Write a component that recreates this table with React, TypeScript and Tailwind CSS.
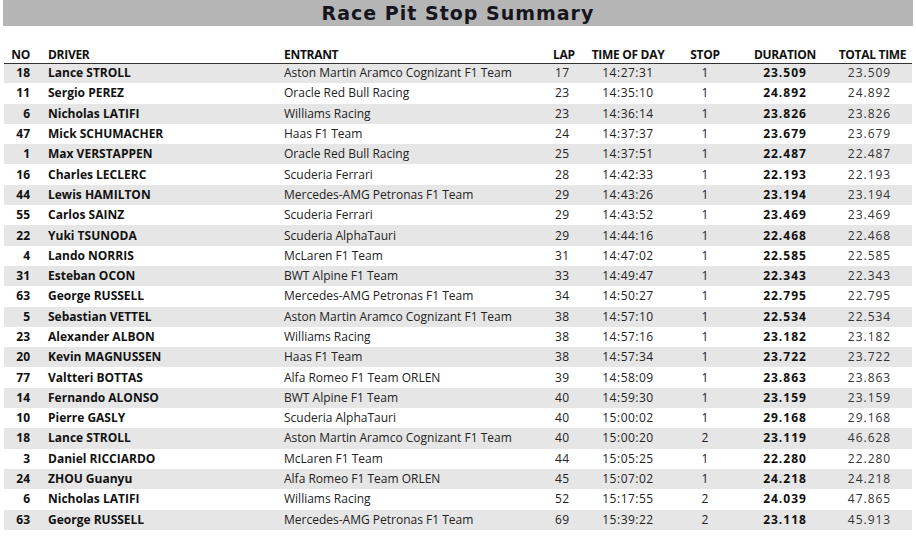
const rows: [string, string, string, string, string, string, string, string][] = [
  ["18", "Lance STROLL", "Aston Martin Aramco Cognizant F1 Team", "17", "14:27:31", "1", "23.509", "23.509"],
  ["11", "Sergio PEREZ", "Oracle Red Bull Racing", "23", "14:35:10", "1", "24.892", "24.892"],
  ["6", "Nicholas LATIFI", "Williams Racing", "23", "14:36:14", "1", "23.826", "23.826"],
  ["47", "Mick SCHUMACHER", "Haas F1 Team", "24", "14:37:37", "1", "23.679", "23.679"],
  ["1", "Max VERSTAPPEN", "Oracle Red Bull Racing", "25", "14:37:51", "1", "22.487", "22.487"],
  ["16", "Charles LECLERC", "Scuderia Ferrari", "28", "14:42:33", "1", "22.193", "22.193"],
  ["44", "Lewis HAMILTON", "Mercedes-AMG Petronas F1 Team", "29", "14:43:26", "1", "23.194", "23.194"],
  ["55", "Carlos SAINZ", "Scuderia Ferrari", "29", "14:43:52", "1", "23.469", "23.469"],
  ["22", "Yuki TSUNODA", "Scuderia AlphaTauri", "29", "14:44:16", "1", "22.468", "22.468"],
  ["4", "Lando NORRIS", "McLaren F1 Team", "31", "14:47:02", "1", "22.585", "22.585"],
  ["31", "Esteban OCON", "BWT Alpine F1 Team", "33", "14:49:47", "1", "22.343", "22.343"],
  ["63", "George RUSSELL", "Mercedes-AMG Petronas F1 Team", "34", "14:50:27", "1", "22.795", "22.795"],
  ["5", "Sebastian VETTEL", "Aston Martin Aramco Cognizant F1 Team", "38", "14:57:10", "1", "22.534", "22.534"],
  ["23", "Alexander ALBON", "Williams Racing", "38", "14:57:16", "1", "23.182", "23.182"],
  ["20", "Kevin MAGNUSSEN", "Haas F1 Team", "38", "14:57:34", "1", "23.722", "23.722"],
  ["77", "Valtteri BOTTAS", "Alfa Romeo F1 Team ORLEN", "39", "14:58:09", "1", "23.863", "23.863"],
  ["14", "Fernando ALONSO", "BWT Alpine F1 Team", "40", "14:59:30", "1", "23.159", "23.159"],
  ["10", "Pierre GASLY", "Scuderia AlphaTauri", "40", "15:00:02", "1", "29.168", "29.168"],
  ["18", "Lance STROLL", "Aston Martin Aramco Cognizant F1 Team", "40", "15:00:20", "2", "23.119", "46.628"],
  ["3", "Daniel RICCIARDO", "McLaren F1 Team", "44", "15:05:25", "1", "22.280", "22.280"],
  ["24", "ZHOU Guanyu", "Alfa Romeo F1 Team ORLEN", "45", "15:07:02", "1", "24.218", "24.218"],
  ["6", "Nicholas LATIFI", "Williams Racing", "52", "15:17:55", "2", "24.039", "47.865"],
  ["63", "George RUSSELL", "Mercedes-AMG Petronas F1 Team", "69", "15:39:22", "2", "23.118", "45.913"],
];

export default function App() {
  return (
    <div className="w-[916px] h-[538px] bg-white overflow-hidden font-['Open_Sans',sans-serif] text-[#1e1e1e]">
      <div className="mx-[3px] h-[26px] bg-[#b5b5b5] flex items-center justify-center">
        <h1 className="font-['DejaVu_Sans',sans-serif] font-bold text-[19px] leading-none tracking-[1px] text-[#15151e]">
          Race Pit Stop Summary
        </h1>
      </div>

      <table className="ml-[4px] mt-[18px] w-[908px] table-fixed border-collapse text-[12px]">
        <colgroup>
          <col className="w-[36px]" />
          <col className="w-[244px]" />
          <col className="w-[264px]" />
          <col className="w-[41px]" />
          <col className="w-[78px]" />
          <col className="w-[76px]" />
          <col className="w-[84px]" />
          <col className="w-[85px]" />
        </colgroup>
        <thead>
          <tr className="h-[19px] leading-none border-b-[1.5px] border-[#333] font-bold text-[#111] tracking-[-0.3px]">
            <th className="text-right pr-[10px] pt-[3px] font-bold">NO</th>
            <th className="text-left pl-[8px] pt-[3px] font-bold">DRIVER</th>
            <th className="text-left pt-[3px] font-bold">ENTRANT</th>
            <th className="text-left pl-[5px] pt-[3px] font-bold">LAP</th>
            <th className="text-center pt-[3px] font-bold">TIME OF DAY</th>
            <th className="text-center pt-[3px] font-bold">STOP</th>
            <th className="text-center pt-[3px] font-bold">DURATION</th>
            <th className="text-center pl-[6px] pt-[3px] font-bold">TOTAL TIME</th>
          </tr>
        </thead>
        <tbody>
          {rows.map((r, i) => (
            <tr key={i} className={`h-[20.3px] leading-none ${i % 2 === 0 ? "bg-[#e6e6e6]" : "bg-white"}`}>
              <td className="text-right pr-[10px] font-bold text-[#111]">{r[0]}</td>
              <td className="pl-[8px] font-bold text-[#111] whitespace-nowrap">{r[1]}</td>
              <td className="text-[#222] whitespace-nowrap">{r[2]}</td>
              <td className="pl-[7px] text-[#222] tracking-[0.4px]">{r[3]}</td>
              <td className="text-center text-[#222] tracking-[0.5px]">{r[4]}</td>
              <td className="text-center text-[#222]">{r[5]}</td>
              <td className="text-center font-bold text-[#111] tracking-[1px]">{r[6]}</td>
              <td className="text-center text-[#333] tracking-[1px]">{r[7]}</td>
            </tr>
          ))}
        </tbody>
      </table>
    </div>
  );
}
